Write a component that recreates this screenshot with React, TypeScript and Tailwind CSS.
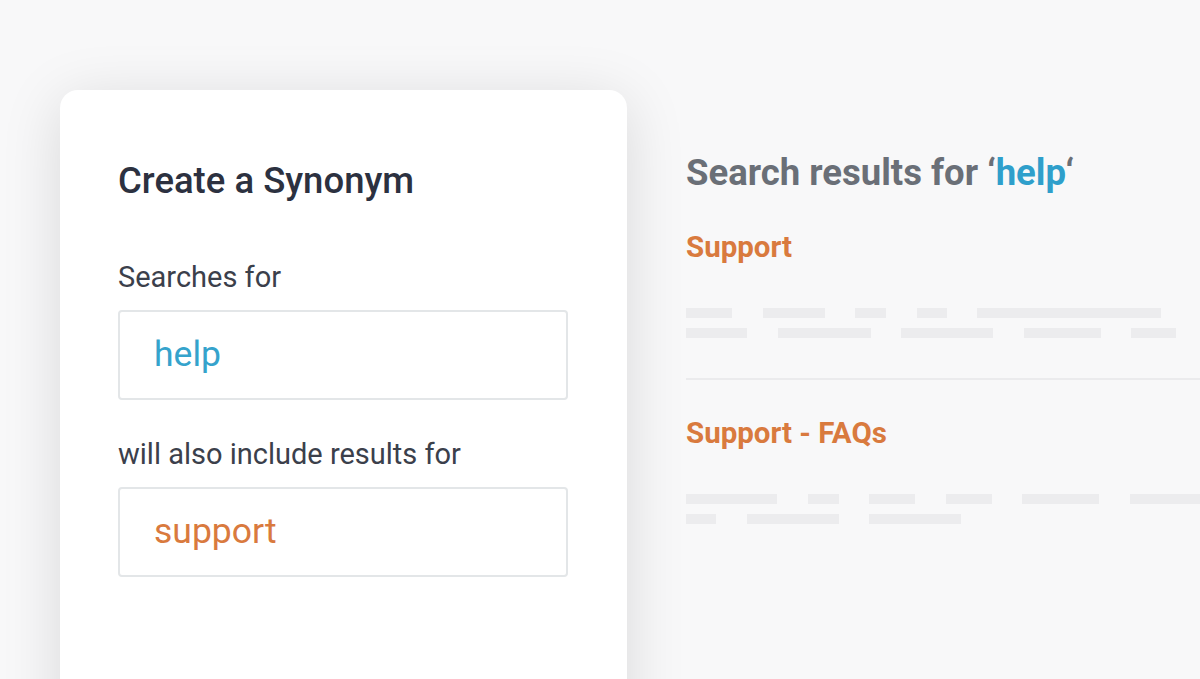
import React from "react";

const Bar = ({ w }: { w: number }) => (
  <div className="h-[10px] bg-[#ececee] shrink-0" style={{ width: w }} />
);

const Row = ({ widths }: { widths: number[] }) => (
  <div className="flex gap-[30.5px]">
    {widths.map((w, i) => (
      <Bar key={i} w={w} />
    ))}
  </div>
);

export default function App() {
  return (
    <div
      className="w-[1200px] h-[679px] overflow-hidden bg-[#f8f8f9] flex"
      style={{ fontFamily: "Roboto, 'Noto Sans', sans-serif" }}
    >
      <div className="ml-[60px] mt-[90px] w-[567px] h-[700px] shrink-0 bg-white rounded-[18px] shadow-[0_10px_60px_rgba(0,0,0,0.13)] pl-[58px] pr-[59px] pt-[70px]">
        <h1 className="text-[36.5px] leading-[42px] font-medium text-[#2c3140] whitespace-nowrap">
          Create a Synonym
        </h1>
        <div className="mt-[58px] text-[29px] leading-[34px] text-[#3b404b] whitespace-nowrap">Searches for</div>
        <div className="mt-[16px] h-[90px] border-2 border-[#e3e6e8] rounded-[4px] flex items-center pl-[34px]">
          <span className="text-[35.5px] text-[#35a3cc]">help</span>
        </div>
        <div className="mt-[37px] text-[29px] leading-[34px] text-[#3b404b] whitespace-nowrap">will also include results for</div>
        <div className="mt-[16px] h-[90px] border-2 border-[#e3e6e8] rounded-[4px] flex items-center pl-[34px]">
          <span className="text-[35.5px] text-[#d97a3e]">support</span>
        </div>
      </div>
      <div className="ml-[59px] flex-1 pt-[152px] min-w-0">
        <div className="text-[36.5px] leading-[42px] font-bold text-[#6a6f77] whitespace-nowrap">
          Search results for ‘<span className="text-[#2f9fcb]">help</span>‘
        </div>
        <div className="mt-[36px] text-[29.5px] leading-[34px] font-bold text-[#d97a3e]">Support</div>
        <div className="mt-[44px] flex flex-col gap-[10px]">
          <Row widths={[46, 62, 31, 30, 184]} />
          <Row widths={[61, 93, 92, 77, 45]} />
        </div>
        <div className="mt-[40px] h-[2px] bg-[#ebebed] w-[600px]" />
        <div className="mt-[36px] text-[29.5px] leading-[34px] font-bold text-[#d97a3e] whitespace-nowrap">Support - FAQs</div>
        <div className="mt-[44px] flex flex-col gap-[10px]">
          <Row widths={[91, 31, 46, 46, 77, 120]} />
          <Row widths={[30, 92, 92]} />
        </div>
      </div>
    </div>
  );
}
